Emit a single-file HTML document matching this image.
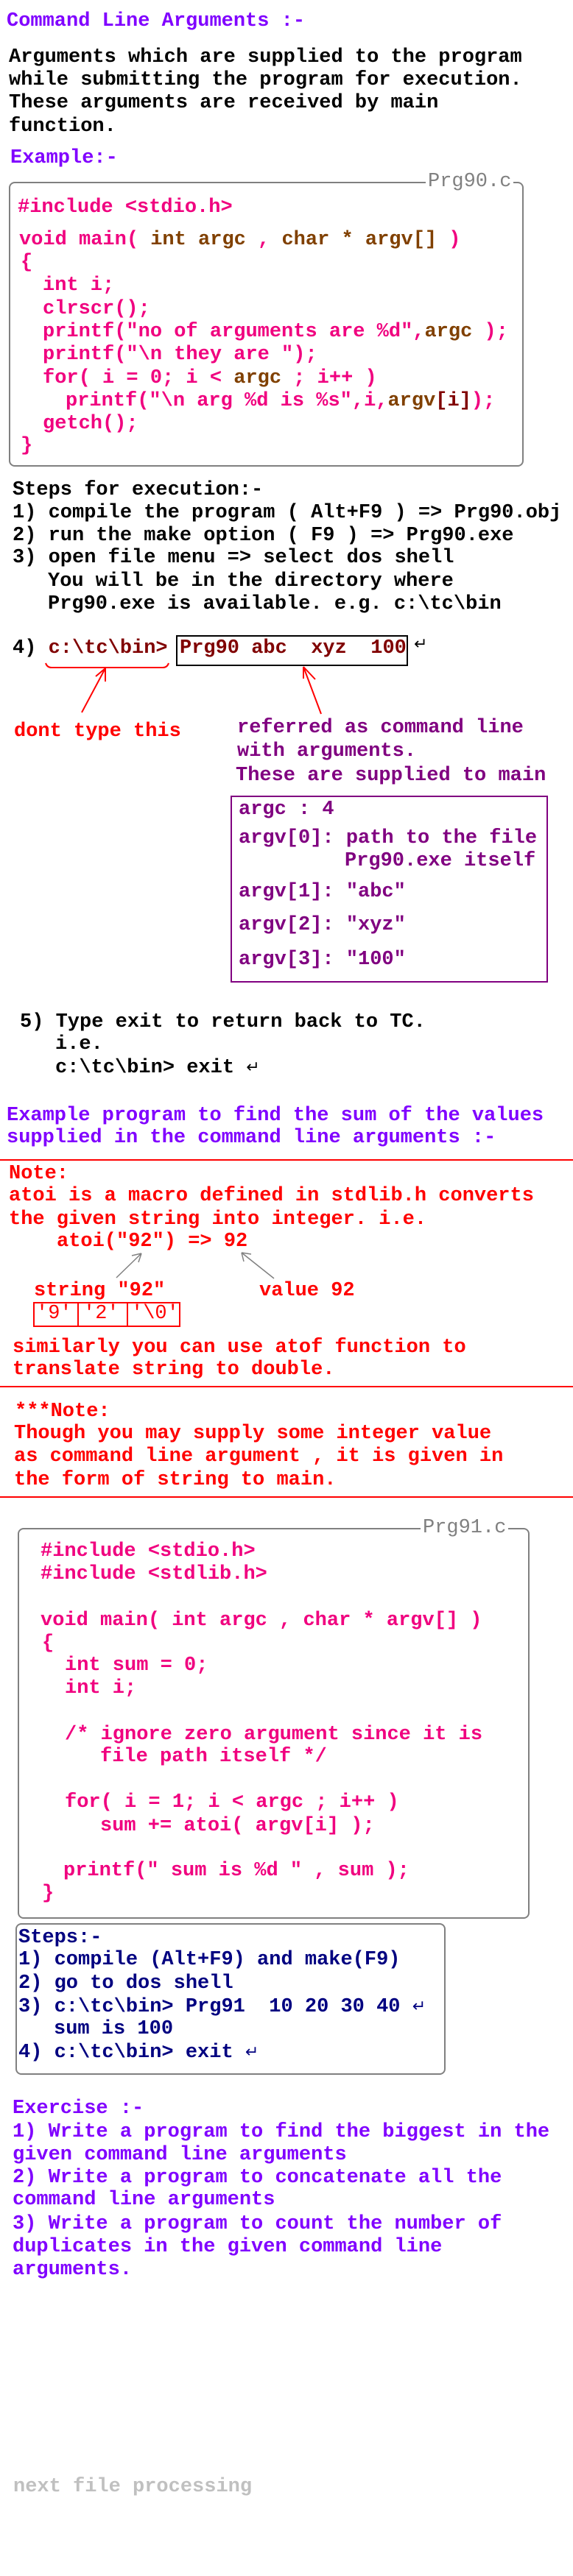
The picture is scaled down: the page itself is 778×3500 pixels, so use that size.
<!DOCTYPE html>
<html><head><meta charset="utf-8">
<style>
html,body{margin:0;padding:0;background:#fff;}
body{width:778px;height:3500px;position:relative;overflow:hidden;font-family:"Liberation Mono","DejaVu Sans Mono",monospace;font-weight:bold;font-size:27px;}
.l{position:absolute;white-space:pre;line-height:31px;height:31px;}
.pu{color:#8000ff}.bk{color:#000}.pk{color:#f0007f}.br{color:#804000}.dr{color:#800000}
.mg{color:#800080}.rd{color:#ff0000}.nv{color:#000080}.gy{color:#808080}
.box{position:absolute;border:2px solid #808080;border-radius:8px;box-sizing:border-box;}
.lbl{position:absolute;background:#fff;color:#808080;font-weight:normal;white-space:pre;line-height:31px;padding:0 3px;}
</style></head><body>
<svg width="778" height="3500" style="position:absolute;left:0;top:0" fill="none">
<path d="M62,901 Q64,907 70,907 L221,907 Q227,907 229,901" stroke="#ff0000" stroke-width="2"/>
<path d="M111,968 L143,908 M143,908 L143,926 M143,908 L130,919" stroke="#ff0000" stroke-width="2"/>
<path d="M436,970 L412,906 M412,906 L412,922 M412,906 L428,923" stroke="#ff0000" stroke-width="2"/>
<path d="M158,1736 L192,1703 M192,1703 L179,1706 M192,1703 L188,1715" stroke="#808080" stroke-width="1.5"/>
<path d="M372,1737 L328,1702 M328,1702 L341,1704 M328,1702 L331,1714" stroke="#808080" stroke-width="1.5"/>
</svg>

<div class="l pu" style="left:9px;top:14px">Command Line Arguments :-</div>
<div class="l bk" style="left:12px;top:63px">Arguments which are supplied to the program</div>
<div class="l bk" style="left:12px;top:94px">while submitting the program for execution.</div>
<div class="l bk" style="left:12px;top:125px">These arguments are received by main</div>
<div class="l bk" style="left:12px;top:157px">function.</div>
<div class="l pu" style="left:14px;top:200px">Example:-</div>

<div class="box" style="left:12px;top:247px;width:699px;height:387px"></div>
<div class="lbl" style="left:578px;top:232px">Prg90.c</div>
<div class="l pk" style="left:24px;top:267px">#include &lt;stdio.h&gt;</div>
<div class="l pk" style="left:26px;top:311px">void main( <span class="br">int argc</span> , <span class="br">char * argv[]</span> )</div>
<div class="l pk" style="left:28px;top:342px">{</div>
<div class="l pk" style="left:58px;top:373px">int i;</div>
<div class="l pk" style="left:58px;top:405px">clrscr();</div>
<div class="l pk" style="left:58px;top:436px">printf("no of arguments are %d",<span class="br">argc</span> );</div>
<div class="l pk" style="left:58px;top:467px">printf("\n they are ");</div>
<div class="l pk" style="left:58px;top:499px">for( i = 0; i &lt; <span class="br">argc</span> ; i++ )</div>
<div class="l pk" style="left:89px;top:530px">printf("\n arg %d is %s",i,<span class="br">argv</span><span class="dr">[i]</span>);</div>
<div class="l pk" style="left:58px;top:561px">getch();</div>
<div class="l pk" style="left:28px;top:591px">}</div>

<div class="l bk" style="left:17px;top:651px">Steps for execution:-</div>
<div class="l bk" style="left:17px;top:682px">1) compile the program ( Alt+F9 ) =&gt; Prg90.obj</div>
<div class="l bk" style="left:17px;top:713px">2) run the make option ( F9 ) =&gt; Prg90.exe</div>
<div class="l bk" style="left:17px;top:743px">3) open file menu =&gt; select dos shell</div>
<div class="l bk" style="left:65px;top:775px">You will be in the directory where</div>
<div class="l bk" style="left:65px;top:806px">Prg90.exe is available. e.g. c:\tc\bin</div>

<div class="l bk" style="left:17px;top:866px">4) <span class="dr">c:\tc\bin&gt;</span></div>
<div style="position:absolute;left:239px;top:863px;width:315px;height:42px;border:2px solid #000;box-sizing:border-box"></div>
<div class="l dr" style="left:244px;top:866px">Prg90 abc  xyz  100</div>
<div class="l bk" style="left:562px;top:860px;font-weight:normal;font-family:'DejaVu Sans',sans-serif;font-size:22px">↵</div>

<div class="l rd" style="left:19px;top:979px">dont type this</div>
<div class="l mg" style="left:322px;top:974px">referred as command line</div>
<div class="l mg" style="left:322px;top:1006px">with arguments.</div>
<div class="l mg" style="left:320px;top:1039px">These are supplied to main</div>

<div style="position:absolute;left:313px;top:1081px;width:431px;height:254px;border:2px solid #800080;box-sizing:border-box"></div>
<div class="l mg" style="left:324px;top:1085px">argc : 4</div>
<div class="l mg" style="left:324px;top:1124px">argv[0]: path to the file</div>
<div class="l mg" style="left:468px;top:1155px">Prg90.exe itself</div>
<div class="l mg" style="left:324px;top:1197px">argv[1]: "abc"</div>
<div class="l mg" style="left:324px;top:1242px">argv[2]: "xyz"</div>
<div class="l mg" style="left:324px;top:1289px">argv[3]: "100"</div>

<div class="l bk" style="left:27px;top:1374px">5) Type exit to return back to TC.</div>
<div class="l bk" style="left:75px;top:1404px">i.e.</div>
<div class="l bk" style="left:75px;top:1435px">c:\tc\bin&gt; exit <span style="font-weight:normal;font-family:'DejaVu Sans',sans-serif;font-size:22px">↵</span></div>

<div class="l pu" style="left:9px;top:1501px">Example program to find the sum of the values</div>
<div class="l pu" style="left:9px;top:1531px">supplied in the command line arguments :-</div>

<div style="position:absolute;left:0;top:1575px;width:778px;height:2px;background:#ff0000"></div>
<div class="l rd" style="left:12px;top:1580px">Note:</div>
<div class="l rd" style="left:12px;top:1610px">atoi is a macro defined in stdlib.h converts</div>
<div class="l rd" style="left:12px;top:1642px">the given string into integer. i.e.</div>
<div class="l rd" style="left:77px;top:1672px">atoi("92") =&gt; 92</div>
<div class="l rd" style="left:46px;top:1739px">string "92"</div>
<div class="l rd" style="left:352px;top:1739px">value 92</div>
<div style="position:absolute;left:45px;top:1769px;width:200px;height:34px;border:2px solid #ff0000;box-sizing:border-box"></div>
<div style="position:absolute;left:105px;top:1769px;width:2px;height:34px;background:#ff0000"></div>
<div style="position:absolute;left:172px;top:1769px;width:2px;height:34px;background:#ff0000"></div>
<div class="l rd" style="left:49px;top:1770px;font-weight:normal">'9'</div>
<div class="l rd" style="left:113px;top:1770px;font-weight:normal">'2'</div>
<div class="l rd" style="left:178px;top:1770px;font-weight:normal">'\0'</div>
<div class="l rd" style="left:17px;top:1816px">similarly you can use atof function to</div>
<div class="l rd" style="left:17px;top:1846px">translate string to double.</div>
<div style="position:absolute;left:0;top:1883px;width:778px;height:2px;background:#ff0000"></div>
<div class="l rd" style="left:20px;top:1903px">***Note:</div>
<div class="l rd" style="left:19px;top:1933px">Though you may supply some integer value</div>
<div class="l rd" style="left:19px;top:1964px">as command line argument , it is given in</div>
<div class="l rd" style="left:19px;top:1996px">the form of string to main.</div>
<div style="position:absolute;left:0;top:2033px;width:778px;height:2px;background:#ff0000"></div>

<div class="box" style="left:24px;top:2076px;width:695px;height:531px"></div>
<div class="lbl" style="left:571px;top:2061px">Prg91.c</div>
<div class="l pk" style="left:55px;top:2093px">#include &lt;stdio.h&gt;</div>
<div class="l pk" style="left:55px;top:2124px">#include &lt;stdlib.h&gt;</div>
<div class="l pk" style="left:55px;top:2187px">void main( int argc , char * argv[] )</div>
<div class="l pk" style="left:57px;top:2218px">{</div>
<div class="l pk" style="left:88px;top:2248px">int sum = 0;</div>
<div class="l pk" style="left:88px;top:2279px">int i;</div>
<div class="l pk" style="left:88px;top:2342px">/* ignore zero argument since it is</div>
<div class="l pk" style="left:136px;top:2372px">file path itself */</div>
<div class="l pk" style="left:88px;top:2434px">for( i = 1; i &lt; argc ; i++ )</div>
<div class="l pk" style="left:136px;top:2466px">sum += atoi( argv[i] );</div>
<div class="l pk" style="left:86px;top:2527px">printf(" sum is %d " , sum );</div>
<div class="l pk" style="left:57px;top:2558px">}</div>

<div class="box" style="left:21px;top:2613px;width:584px;height:206px"></div>
<div class="l nv" style="left:25px;top:2618px">Steps:-</div>
<div class="l nv" style="left:25px;top:2648px">1) compile (Alt+F9) and make(F9)</div>
<div class="l nv" style="left:25px;top:2680px">2) go to dos shell</div>
<div class="l nv" style="left:25px;top:2711px">3) c:\tc\bin&gt; Prg91  10 20 30 40 <span style="font-weight:normal;font-family:'DejaVu Sans',sans-serif;font-size:22px">↵</span></div>
<div class="l nv" style="left:73px;top:2742px">sum is 100</div>
<div class="l nv" style="left:25px;top:2773px">4) c:\tc\bin&gt; exit <span style="font-weight:normal;font-family:'DejaVu Sans',sans-serif;font-size:22px">↵</span></div>

<div class="l pu" style="left:17px;top:2850px">Exercise :-</div>
<div class="l pu" style="left:17px;top:2882px">1) Write a program to find the biggest in the</div>
<div class="l pu" style="left:17px;top:2913px">given command line arguments</div>
<div class="l pu" style="left:17px;top:2944px">2) Write a program to concatenate all the</div>
<div class="l pu" style="left:17px;top:2974px">command line arguments</div>
<div class="l pu" style="left:17px;top:3007px">3) Write a program to count the number of</div>
<div class="l pu" style="left:17px;top:3038px">duplicates in the given command line</div>
<div class="l pu" style="left:17px;top:3069px">arguments.</div>

<div class="l" style="left:18px;top:3364px;color:#c0c0c0">next file processing</div>
</body></html>
